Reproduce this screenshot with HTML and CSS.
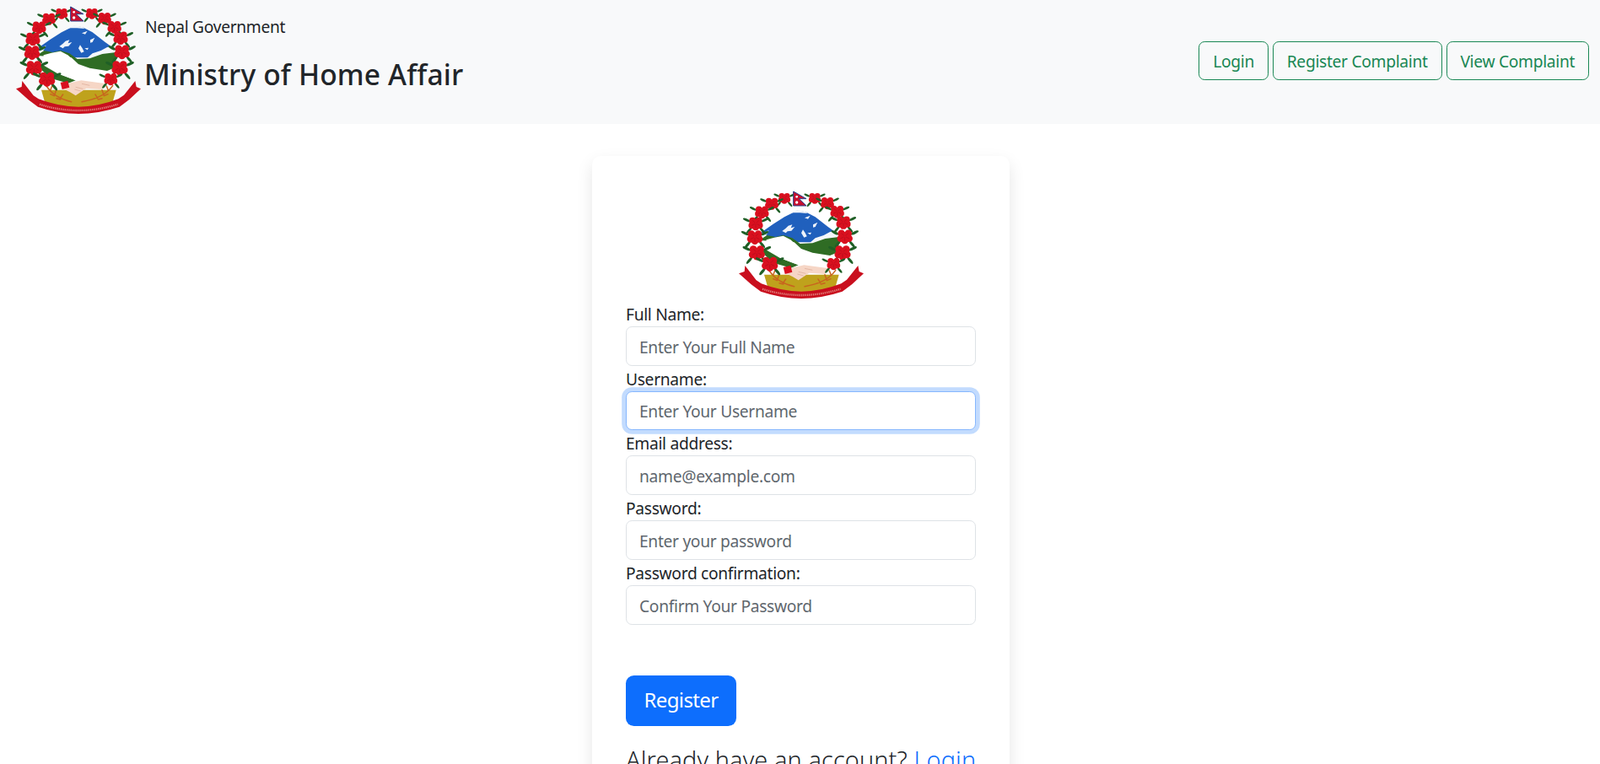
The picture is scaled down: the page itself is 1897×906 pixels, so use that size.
FILE: index.html
```html
<!DOCTYPE html>
<html lang="en">
<head>
<meta charset="utf-8">
<title>Register - Ministry of Home Affair</title>
<link rel="stylesheet" href="styles.css">
</head>
<body>
<svg class="defs" width="0" height="0" aria-hidden="true">
  <defs>
    <g id="flower">
      <g fill="#1f5f26">
        <ellipse cx="-26" cy="-9" rx="11" ry="3.5" transform="rotate(25 -26 -9)"/>
        <ellipse cx="26" cy="-9" rx="11" ry="3.5" transform="rotate(-25 26 -9)"/>
        <ellipse cx="-19" cy="21" rx="11" ry="3.5" transform="rotate(-50 -19 21)"/>
        <ellipse cx="19" cy="21" rx="11" ry="3.5" transform="rotate(50 19 21)"/>
      </g>
      <g fill="#d9101f">
        <circle cx="-9" cy="-7" r="9.5"/><circle cx="9" cy="-7" r="9.5"/>
        <circle cx="-11" cy="6" r="9.5"/><circle cx="11" cy="6" r="9.5"/>
        <circle cx="0" cy="11" r="9.5"/><circle cx="0" cy="-1" r="10"/>
      </g>
      <path d="M-9-8l7 7M9-8l-7 7M-12 7l9-5M12 7l-9-5M0 14V3" stroke="#a50d1a" stroke-width="1.2" fill="none"/>
    </g>
    <g id="emblem">
      <path d="M105 172 150 140 190 115 235 92 265 97 300 115 345 150 382 176 340 205 240 205 150 190Z" fill="#2060bd"/>
      <path d="M216 100 235 90 265 96 272 102 245 100ZM182 165l12-9 10-10 14-4-5 12 14-4-12 14-14 2-6 6ZM262 118l20-8-8 12ZM292 142l16-8-8 16-8 2ZM250 172l6-12 8 12 6 12-10 4ZM272 172l14-2-4 8ZM105 176l30-14-8 16-16 8Z" fill="#eef3fa"/>
      <path d="M280 207 300 190 330 180 352 168 382 162 384 192 340 210Z" fill="#f4f7fb"/>
      <path d="M100 198 128 180 158 186 186 180 218 190 246 210 290 208 335 192 384 186 382 240 352 252 290 242 250 228 225 205ZM108 222 176 262 240 286 214 296 150 278 120 250Z" fill="#2f6c24"/>
      <path d="M126 196 154 188 186 182 212 196 228 210 256 236 300 246 352 254 350 296 292 294 240 286 178 262 124 226Z" fill="#fff"/>
      <path d="M118 320H384L372 362 310 382H190L130 362Z" fill="#bfa21c"/>
      <g fill="none" stroke="#c8641f" stroke-width="4.5" stroke-linecap="round">
        <path d="M135 305Q165 350 225 362M150 322l6-16M165 338l6-18M185 350l10-14M150 335l14 6M172 350l14 4"/>
        <path d="M372 305Q340 350 262 362M356 322l-6-16M340 338l-6-18M318 350l-8-14M355 335l-14 6M334 350l-14 4"/>
      </g>
      <path d="M200 300 260 286 348 298 334 318 278 314 240 340 220 328 196 316Z" fill="#f6d6c6"/>
      <path d="M262 298l28 6M240 310l26 6M236 318l22 6" stroke="#dba894" stroke-width="2" fill="none"/>
      <path d="M186 294l26-7 6 24-26 7Z" fill="#d9101f"/>
      <path d="M28 316 48 309 50 288 90 340 108 352Q180 380 250 380 320 380 392 352L412 338 452 288 456 309 472 316 430 355 396 380Q320 405 250 405 180 405 106 380L72 355Z" fill="#c90f1e"/>
      <path d="M112 371Q180 393 250 393 320 393 390 371" fill="none" stroke="#f0c8b8" stroke-width="7" stroke-dasharray="4 3" opacity=".6"/>
      <use href="#flower" transform="translate(190 47) scale(1.05)"/>
      <use href="#flower" transform="translate(145 66) scale(1.15)"/>
      <use href="#flower" transform="translate(110 96) scale(1.2)"/>
      <use href="#flower" transform="translate(88 137) scale(1.25)"/>
      <use href="#flower" transform="translate(85 185) scale(1.35)"/>
      <use href="#flower" transform="translate(92 240) scale(1.4)"/>
      <use href="#flower" transform="translate(138 280) scale(1.4)"/>
      <use href="#flower" transform="translate(298 47) scale(1.05)"/>
      <use href="#flower" transform="translate(343 64) scale(1.15)"/>
      <use href="#flower" transform="translate(378 95) scale(1.2)"/>
      <use href="#flower" transform="translate(400 133) scale(1.25)"/>
      <use href="#flower" transform="translate(405 183) scale(1.35)"/>
      <use href="#flower" transform="translate(397 240) scale(1.4)"/>
      <use href="#flower" transform="translate(365 280) scale(1.15)"/>
      <path d="M222 24 268 50H242L268 75H222Z" fill="#c8102e" stroke="#27408b" stroke-width="3"/>
      <circle cx="234" cy="43" r="4" fill="#fff"/><circle cx="234" cy="63" r="5" fill="#fff"/>
    </g>
  </defs>
</svg>
<header class="topbar">
  <div class="brand">
    <svg class="emblem emblem-top" viewBox="22 18 456 396" role="img" aria-label="Emblem of Nepal"><use href="#emblem"/></svg>
    <div class="brand-text">
      <p class="brand-sub">Nepal Government</p>
      <h1 class="brand-title">Ministry of Home Affair</h1>
    </div>
  </div>
  <nav class="actions">
    <a class="btn-outline" href="#">Login</a>
    <a class="btn-outline" href="#">Register Complaint</a>
    <a class="btn-outline" href="#">View Complaint</a>
  </nav>
</header>
<main class="content">
  <section class="card">
    <div class="card-logo">
      <svg class="emblem" viewBox="22 18 456 396" role="img" aria-label="Emblem of Nepal"><use href="#emblem"/></svg>
    </div>
    <form class="form">
      <label class="field"><span class="field-label">Full Name:</span><input class="field-input" type="text" placeholder="Enter Your Full Name"></label>
      <label class="field"><span class="field-label">Username:</span><input class="field-input is-focused" type="text" placeholder="Enter Your Username"></label>
      <label class="field"><span class="field-label">Email address:</span><input class="field-input" type="email" placeholder="name@example.com"></label>
      <label class="field"><span class="field-label">Password:</span><input class="field-input" type="password" placeholder="Enter your password"></label>
      <label class="field"><span class="field-label">Password confirmation:</span><input class="field-input" type="password" placeholder="Confirm Your Password"></label>
      <button class="btn-primary" type="button">Register</button>
    </form>
    <p class="signin">Already have an account? <a href="#">Login</a></p>
  </section>
</main>
</body>
</html>
```

FILE: styles.css
```css
* { box-sizing: border-box; }
html, body { height: 100%; }
body {
  margin: 0;
  overflow: hidden;
  background: #fff;
  color: #212529;
  font-family: "Noto Sans", "Open Sans", sans-serif;
  font-size: 19.2px;
  line-height: 28.8px;
  letter-spacing: -.3px;
}
.defs { position: absolute; }
.topbar {
  height: 147px;
  background: #f8f9fa;
  display: flex;
  justify-content: space-between;
  align-items: center;
  padding: 0 13px 0 17px;
}
.brand { display: flex; align-items: flex-start; height: 100%; }
.emblem { display: block; width: 152px; height: 132px; filter: blur(.35px); }
.emblem-top { margin-top: 6px; margin-right: 3px; }
.brand-text { padding-top: 18px; }
.brand-sub { margin: 0 0 21.5px; }
.brand-title { margin: 0 0 0 -1px; font-size: 33.6px; line-height: 40.3px; font-weight: 500; letter-spacing: .15px; }
.actions { display: flex; gap: 5px; margin-top: -3px; }
.btn-outline {
  display: block;
  height: 46.5px;
  padding: 9px 15.9px 0;
  border: 1.2px solid #198754;
  border-radius: 7.2px;
  color: #198754;
  text-decoration: none;
}
.content { display: flex; justify-content: center; padding: 38px 0 0 2px; }
.card {
  width: 495px;
  padding: 40px;
  border-radius: 10px;
  background: #fff;
  box-shadow: 0 8px 19px rgba(0, 0, 0, .1);
}
.card-logo { display: flex; justify-content: center; height: 132.8px; }
.form { display: flex; flex-direction: column; align-items: flex-start; }
.field { display: block; width: 100%; margin-bottom: 1px; }
.field-label { display: block; height: 29px; line-height: 29.6px; }
.field-input {
  display: block;
  width: 100%;
  height: 46.8px;
  padding: 2px 15px 0;
  border: 1.2px solid #dee2e6;
  border-radius: 7.2px;
  background: #fff;
  color: #212529;
  font: inherit;
  letter-spacing: inherit;
  outline: none;
}
.field-input::placeholder { color: #5f676e; opacity: 1; }
.field-input.is-focused {
  border-color: #86b7fe;
  box-shadow: 0 0 0 4.8px rgba(13, 110, 253, .25);
}
.btn-primary {
  margin-top: 59px;
  width: 131px;
  height: 60px;
  padding: 0;
  border: 0;
  border-radius: 9.6px;
  background: #0d6efd;
  color: #fff;
  font: inherit;
  font-size: 24px;
  letter-spacing: -.6px;
}
.signin { margin: 20px 0 0; font-size: 28.8px; line-height: 40px; font-weight: 300; letter-spacing: .15px; white-space: nowrap; }
.signin a { color: #0d6efd; text-decoration: none; }
```
